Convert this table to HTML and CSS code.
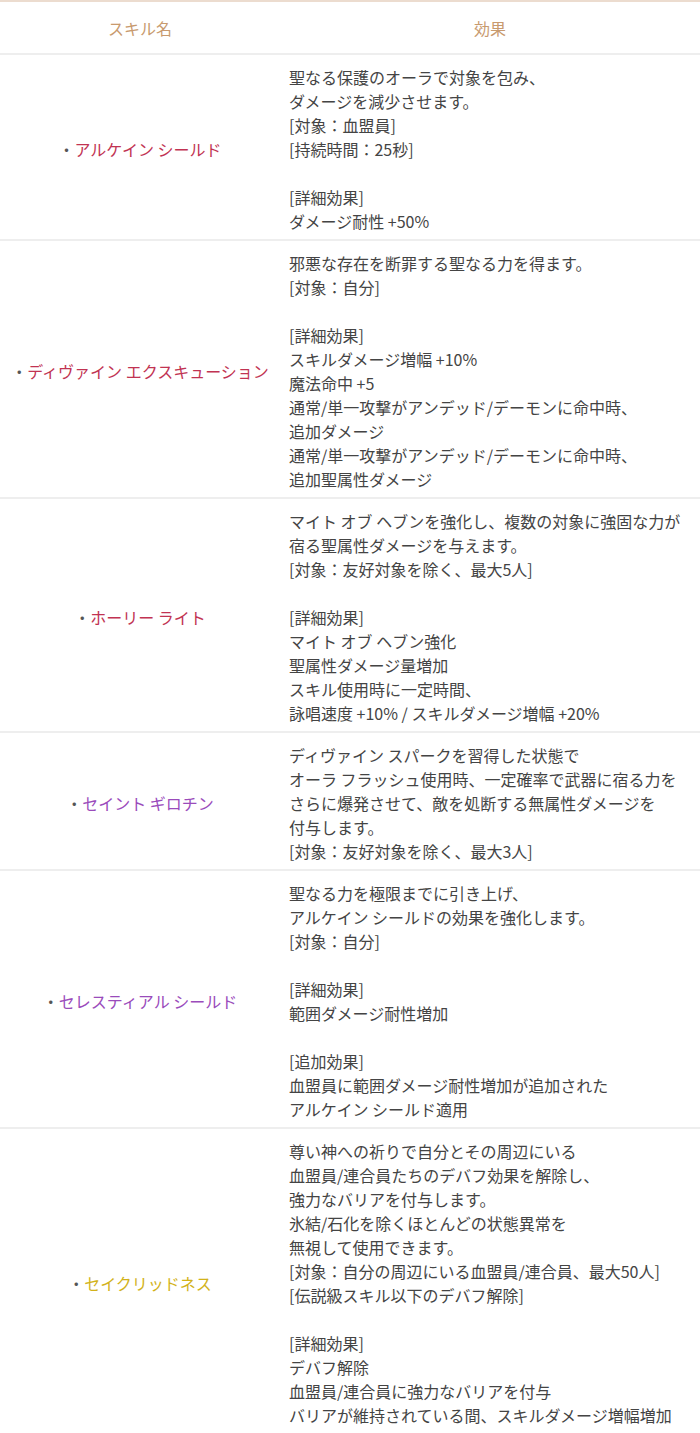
FILE: index.html
```html
<!DOCTYPE html>
<html lang="ja">
<head>
<meta charset="utf-8">
<title>スキル</title>
<link rel="stylesheet" href="styles.css">
</head>
<body>
<table class="skills">
  <thead>
    <tr><th class="col-name">スキル名</th><th class="col-effect">効果</th></tr>
  </thead>
  <tbody>
    <tr>
      <td class="name"><span class="dot">・</span><span class="red">アルケイン シールド</span></td>
      <td class="effect">聖なる保護のオーラで対象を包み、<br>ダメージを減少させます。<br>[対象：血盟員]<br>[持続時間：25秒]<br><br>[詳細効果]<br>ダメージ耐性 +50%</td>
    </tr>
    <tr>
      <td class="name"><span class="dot">・</span><span class="red">ディヴァイン エクスキューション</span></td>
      <td class="effect">邪悪な存在を断罪する聖なる力を得ます。<br>[対象：自分]<br><br>[詳細効果]<br>スキルダメージ増幅 +10%<br>魔法命中 +5<br>通常/単一攻撃がアンデッド/デーモンに命中時、<br>追加ダメージ<br>通常/単一攻撃がアンデッド/デーモンに命中時、<br>追加聖属性ダメージ</td>
    </tr>
    <tr>
      <td class="name"><span class="dot">・</span><span class="red">ホーリー ライト</span></td>
      <td class="effect">マイト オブ ヘブンを強化し、複数の対象に強固な力が<br>宿る聖属性ダメージを与えます。<br>[対象：友好対象を除く、最大5人]<br><br>[詳細効果]<br>マイト オブ ヘブン強化<br>聖属性ダメージ量増加<br>スキル使用時に一定時間、<br>詠唱速度 +10% / スキルダメージ増幅 +20%</td>
    </tr>
    <tr>
      <td class="name"><span class="dot">・</span><span class="purple">セイント ギロチン</span></td>
      <td class="effect">ディヴァイン スパークを習得した状態で<br>オーラ フラッシュ使用時、一定確率で武器に宿る力を<br>さらに爆発させて、敵を処断する無属性ダメージを<br>付与します。<br>[対象：友好対象を除く、最大3人]</td>
    </tr>
    <tr>
      <td class="name"><span class="dot">・</span><span class="purple">セレスティアル シールド</span></td>
      <td class="effect">聖なる力を極限までに引き上げ、<br>アルケイン シールドの効果を強化します。<br>[対象：自分]<br><br>[詳細効果]<br>範囲ダメージ耐性増加<br><br>[追加効果]<br>血盟員に範囲ダメージ耐性増加が追加された<br>アルケイン シールド適用</td>
    </tr>
    <tr class="last">
      <td class="name"><span class="dot">・</span><span class="yellow">セイクリッドネス</span></td>
      <td class="effect">尊い神への祈りで自分とその周辺にいる<br>血盟員/連合員たちのデバフ効果を解除し、<br>強力なバリアを付与します。<br>氷結/石化を除くほとんどの状態異常を<br>無視して使用できます。<br>[対象：自分の周辺にいる血盟員/連合員、最大50人]<br>[伝説級スキル以下のデバフ解除]<br><br>[詳細効果]<br>デバフ解除<br>血盟員/連合員に強力なバリアを付与<br>バリアが維持されている間、スキルダメージ増幅増加</td>
    </tr>
  </tbody>
</table>
</body>
</html>
```
FILE: styles.css
```css
html, body {
  margin: 0;
  padding: 0;
  background: #ffffff;
}
body {
  font-family: "Noto Sans CJK JP", "Noto Sans", sans-serif;
  font-size: 16px;
  color: #444444;
}
.skills {
  width: 700px;
  border-collapse: collapse;
  border-top: 2px solid #ecdccf;
  border-bottom: 2px solid #ecdccf;
}
.skills th {
  font-weight: 400;
  color: #c89a6e;
  height: 51px;
  padding: 0;
  line-height: 24px;
  border-bottom: 2px solid #eeeeee;
}
.col-name {
  width: 280px;
}
.skills td {
  padding: 10px 0 6px;
  line-height: 24px;
  border-bottom: 2px solid #eeeeee;
}
.skills tr.last td {
  border-bottom: none;
}
.name {
  text-align: center;
  vertical-align: middle;
  white-space: nowrap;
}
.effect {
  padding-left: 9px !important;
  vertical-align: top;
  white-space: nowrap;
}
.dot {
  color: #555555;
}
.red {
  color: #c13352;
}
.purple {
  color: #9a4bbb;
}
.yellow {
  color: #d2b21a;
}
```
